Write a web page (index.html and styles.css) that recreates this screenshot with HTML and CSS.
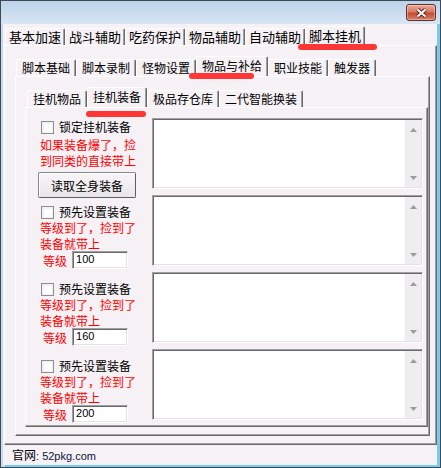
FILE: index.html
```html
<!DOCTYPE html>
<html lang="zh-CN">
<head>
    <meta charset="UTF-8">
    <title>脚本挂机</title>
    <link rel="stylesheet" href="styles.css">
</head>
<body>
    <div class="window">
        <div class="titlebar">
            <div class="close-btn">
                <svg width="13" height="10" viewBox="0 0 13 10">
                    <path d="M2.5 1.5 L10.5 8.5 M10.5 1.5 L2.5 8.5" stroke="#5b2720" stroke-width="4"/>
                    <path d="M2.5 1.5 L10.5 8.5 M10.5 1.5 L2.5 8.5" stroke="#fff" stroke-width="2"/>
                </svg>
            </div>
        </div>
        <div class="frame">
            <div class="client">
                <div class="tabs tabs-main">
                    <div class="tab">基本加速</div>
                    <div class="tab">战斗辅助</div>
                    <div class="tab">吃药保护</div>
                    <div class="tab">物品辅助</div>
                    <div class="tab">自动辅助</div>
                    <div class="tab active">脚本挂机<span class="mark mark-main"></span></div>
                </div>
                <div class="panel panel-main">
                    <div class="tabs tabs-sub">
                        <div class="tab">脚本基础</div>
                        <div class="tab">脚本录制</div>
                        <div class="tab">怪物设置</div>
                        <div class="tab active">物品与补给<span class="mark mark-sub"></span></div>
                        <div class="tab">职业技能</div>
                        <div class="tab">触发器</div>
                    </div>
                    <div class="panel panel-sub">
                        <div class="tabs tabs-inner">
                            <div class="tab">挂机物品</div>
                            <div class="tab active">挂机装备<span class="mark mark-inner"></span></div>
                            <div class="tab">极品存仓库</div>
                            <div class="tab">二代智能换装</div>
                        </div>
                        <div class="panel panel-inner">
                            <div class="equip-row">
                                <div class="equip-left first">
                                    <label class="check"><span class="box"></span>锁定挂机装备</label>
                                    <p class="hint">如果装备爆了，捡<br>到同类的直接带上</p>
                                    <button class="btn">读取全身装备</button>
                                </div>
                                <div class="memo">
                                    <div class="memo-scroll">
                                        <svg width="7" height="4" viewBox="0 0 7 4"><polygon points="3.5,0 7,4 0,4" fill="#9c9c9c"/></svg>
                                        <svg width="7" height="4" viewBox="0 0 7 4"><polygon points="0,0 7,0 3.5,4" fill="#9c9c9c"/></svg>
                                    </div>
                                </div>
                            </div>
                            <div class="equip-row">
                                <div class="equip-left">
                                    <label class="check"><span class="box"></span>预先设置装备</label>
                                    <p class="hint">等级到了，捡到了<br>装备就带上</p>
                                    <div class="level"><span>等级</span><div class="level-input">100</div></div>
                                </div>
                                <div class="memo">
                                    <div class="memo-scroll">
                                        <svg width="7" height="4" viewBox="0 0 7 4"><polygon points="3.5,0 7,4 0,4" fill="#9c9c9c"/></svg>
                                        <svg width="7" height="4" viewBox="0 0 7 4"><polygon points="0,0 7,0 3.5,4" fill="#9c9c9c"/></svg>
                                    </div>
                                </div>
                            </div>
                            <div class="equip-row">
                                <div class="equip-left">
                                    <label class="check"><span class="box"></span>预先设置装备</label>
                                    <p class="hint">等级到了，捡到了<br>装备就带上</p>
                                    <div class="level"><span>等级</span><div class="level-input">160</div></div>
                                </div>
                                <div class="memo">
                                    <div class="memo-scroll">
                                        <svg width="7" height="4" viewBox="0 0 7 4"><polygon points="3.5,0 7,4 0,4" fill="#9c9c9c"/></svg>
                                        <svg width="7" height="4" viewBox="0 0 7 4"><polygon points="0,0 7,0 3.5,4" fill="#9c9c9c"/></svg>
                                    </div>
                                </div>
                            </div>
                            <div class="equip-row">
                                <div class="equip-left">
                                    <label class="check"><span class="box"></span>预先设置装备</label>
                                    <p class="hint">等级到了，捡到了<br>装备就带上</p>
                                    <div class="level"><span>等级</span><div class="level-input">200</div></div>
                                </div>
                                <div class="memo">
                                    <div class="memo-scroll">
                                        <svg width="7" height="4" viewBox="0 0 7 4"><polygon points="3.5,0 7,4 0,4" fill="#9c9c9c"/></svg>
                                        <svg width="7" height="4" viewBox="0 0 7 4"><polygon points="0,0 7,0 3.5,4" fill="#9c9c9c"/></svg>
                                    </div>
                                </div>
                            </div>
                        </div>
                    </div>
                </div>
                <div class="statusbar">官网<span class="site">: 52pkg.com</span></div>
            </div>
        </div>
    </div>
</body>
</html>
```

FILE: styles.css
```css
* {
    margin: 0;
    padding: 0;
    box-sizing: border-box;
}

body {
    font-family: "Noto Sans CJK SC", sans-serif;
    font-size: 12px;
    color: #000;
    background: #fff;
}

.window {
    width: 441px;
    height: 468px;
    border: 1px solid #3c4957;
    display: flex;
    flex-direction: column;
    background: #8ccaee;
}

.titlebar {
    height: 23px;
    background: linear-gradient(#bcd2ea, #d8e6f4);
    display: flex;
    justify-content: flex-end;
    align-items: flex-start;
}

.close-btn {
    width: 30px;
    height: 17px;
    margin: 3px 4px 0 0;
    border: 1px solid #6b2a22;
    border-radius: 3px;
    background: linear-gradient(#e9ab9b, #d57a66 45%, #c24c36 55%, #d8806a);
    box-shadow: inset 0 0 0 1px rgba(255, 255, 255, 0.35);
    display: flex;
    align-items: center;
    justify-content: center;
}

.frame {
    flex: 1;
    display: flex;
    padding: 0 3px 2px 2px;
    background: linear-gradient(90deg, #c8dcef, #c8dcef 4px, #7cc8ee 4px);
}

.client {
    flex: 1;
    display: flex;
    flex-direction: column;
    background: #f5f1f5;
}

/* tab strips */
.tabs {
    display: flex;
    align-items: flex-end;
    height: 20px;
    flex-shrink: 0;
}

.tabs-main {
    height: 19px;
    margin: 2px 0 0 2px;
}

.tabs-sub {
    margin-left: 1px;
}

.tabs-inner {
    margin-left: 2px;
}

.tab {
    position: relative;
    height: 17px;
    padding: 0 5px;
    line-height: 16px;
    white-space: nowrap;
    border-top: 1px solid #fff;
    border-left: 1px solid #fff;
    border-right: 1px solid #696969;
    border-radius: 2px 2px 0 0;
    box-shadow: inset -1px 0 0 #a0a0a0;
}

.tabs-main .tab {
    padding: 0 3px;
    font-size: 13px;
}

.tab.active {
    height: 20px;
    line-height: 18px;
    background: #f5f1f5;
    z-index: 1;
}

.tabs-main .tab.active {
    height: 19px;
}

/* red annotation strokes drawn over the tabs */
.mark {
    position: absolute;
    height: 6px;
    background: #ff3636;
    border-radius: 3px;
}

.mark-main {
    left: -8px;
    top: 17px;
    width: 79px;
}

.mark-sub {
    left: -8px;
    top: 16px;
    width: 65px;
}

.mark-inner {
    left: -2px;
    top: 23px;
    width: 60px;
}

/* panels */
.panel {
    flex: 1;
    display: flex;
    flex-direction: column;
    border-top: 1px solid #fff;
    border-left: 1px solid #fff;
    border-right: 1px solid #696969;
    border-bottom: 1px solid #696969;
    box-shadow: inset -1px -1px 0 #a0a0a0;
}

.panel-main {
    margin-left: 1px;
    padding: 10px 6px 8px 10px;
}

.panel-sub {
    padding: 10px 1px 8px 9px;
}

.panel-inner {
    padding: 10px 4px 6px 12px;
    gap: 6px;
}

/* equipment rows */
.equip-row {
    display: flex;
    height: 71px;
    flex-shrink: 0;
}

.equip-left {
    width: 114px;
    padding-top: 9px;
    display: flex;
    flex-direction: column;
    align-items: flex-start;
}

.equip-left > * {
    flex-shrink: 0;
}

.equip-left.first {
    padding-top: 1px;
}

.check {
    display: flex;
    align-items: center;
    gap: 5px;
    margin-left: 3px;
    line-height: 16px;
}

.box {
    width: 13px;
    height: 13px;
    border: 1px solid #8e8f8f;
    background: #fff;
    box-shadow: inset 0 0 0 1px #f0f0f0, inset 1px 1px 2px #d6d6d6;
}

.hint {
    margin-left: 2px;
    color: #ff0000;
    line-height: 16px;
}

.first .hint {
    margin-top: 2px;
}

.btn {
    width: 98px;
    height: 26px;
    margin-top: 3px;
    font-family: "Noto Sans CJK SC", sans-serif;
    font-size: 12px;
    color: #000;
    border: 1px solid #8a8a8a;
    border-right-color: #5e5e5e;
    border-bottom-color: #5e5e5e;
    border-radius: 2px;
    background: linear-gradient(#f8f6f8, #e9e6e9);
    box-shadow: inset 1px 1px 0 #fff;
}

.level {
    display: flex;
    align-items: center;
    gap: 5px;
    margin: -1px 0 0 5px;
    color: #ff0000;
}

.level-input {
    width: 56px;
    height: 18px;
    padding-left: 3px;
    font-family: "Liberation Sans", sans-serif;
    font-size: 11px;
    line-height: 15px;
    color: #000;
    background: #fff;
    border: 1px solid;
    border-color: #a0a0a0 #fff #fff #a0a0a0;
    box-shadow: inset 1px 1px 0 #696969, inset -1px -1px 0 #e3e3e3;
}

.memo {
    flex: 1;
    display: flex;
    justify-content: flex-end;
    background: #fff;
    border: 1px solid;
    border-color: #a0a0a0 #fff #fff #a0a0a0;
    box-shadow: inset 1px 1px 0 #696969, inset -1px -1px 0 #e3e3e3;
}

.memo-scroll {
    width: 17px;
    margin: 1px 1px 1px 0;
    background: #efedef;
    border-left: 1px solid #f7f7f7;
    display: flex;
    flex-direction: column;
    justify-content: space-between;
    align-items: center;
    padding: 8px 0 7px;
}

.statusbar {
    height: 20px;
    line-height: 20px;
    padding-left: 9px;
    flex-shrink: 0;
}

.site {
    font-family: "Liberation Sans", sans-serif;
    font-size: 11px;
    color: #0c1640;
}
```
